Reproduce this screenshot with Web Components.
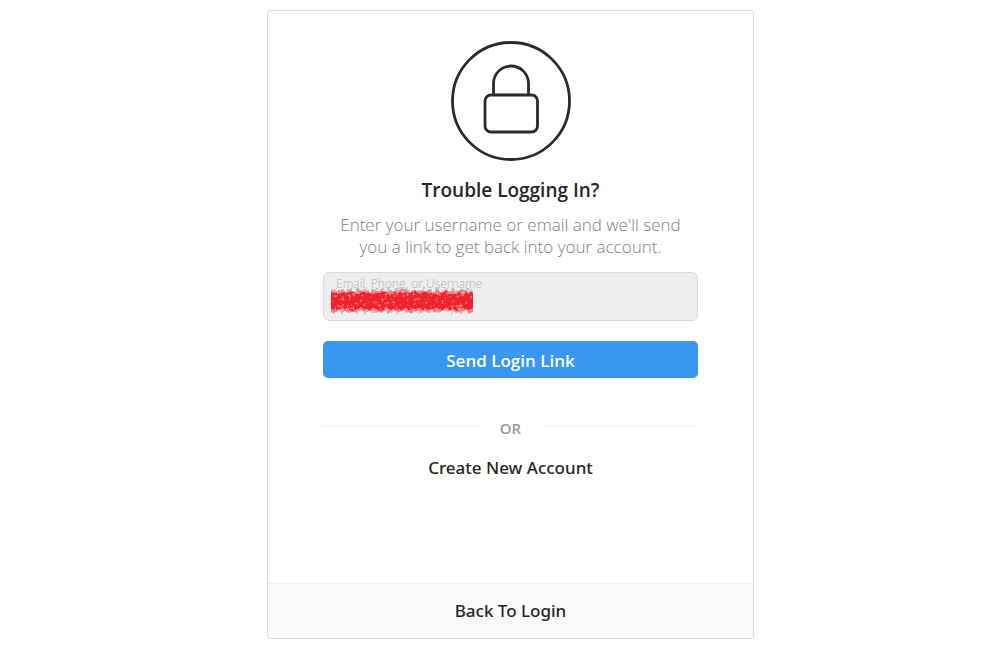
<!DOCTYPE html>
<html lang="en">
<head>
<meta charset="utf-8">
<meta name="viewport" content="width=device-width, initial-scale=1">
<title>Trouble Logging In?</title>
<style>
body { margin: 0; background: #fff; color: #262626; font-family: "Open Sans", "Noto Sans", sans-serif; }
</style>
</head>
<body>
<recovery-page></recovery-page>
<script>
const define = (name, html, setup) => customElements.define(name, class extends HTMLElement {
  constructor() {
    super();
    const t = document.createElement('template');
    t.innerHTML = html;
    this.attachShadow({ mode: 'open' }).append(t.content.cloneNode(true));
  }
  connectedCallback() { if (setup) setup(this, this.shadowRoot); }
});

define('lock-badge', `
<style>:host{display:block;width:120px;height:120px} svg{display:block;width:100%;height:100%}</style>
<svg viewBox="0 0 120 120" fill="none" stroke="#2b2b2b" stroke-width="2.8" aria-hidden="true">
  <circle cx="60" cy="60" r="58.5"/>
  <path d="M42.5 53V42.5a17.5 17.5 0 0 1 35 0V53"/>
  <rect x="34" y="54" width="52.5" height="37" rx="6"/>
</svg>`);

define('text-field', `
<style>
:host{display:block;position:relative}
.box{display:flex;flex-direction:column;box-sizing:border-box;height:49px;padding:3px 12px;border:1px solid #dbdbdb;border-radius:6px;background:#eee}
label{font-size:12px;line-height:16px;font-weight:300;color:#b4b0b1}
input{width:100%;flex:1;min-height:0;padding:0;border:0;outline:0;background:transparent;color:inherit;font:inherit;font-size:16px}
::slotted(*){position:absolute;left:8px;top:15px}
</style>
<div class="box"><label for="f"></label><input id="f" type="text" autocomplete="username"></div>
<slot></slot>`, (el, root) => { root.querySelector('label').textContent = el.getAttribute('label'); });

define('spray-mark', `
<style>:host{display:block;width:142px;height:28px;pointer-events:none} svg{display:block;width:100%;height:100%}</style>
<svg viewBox="0 0 142 28" aria-hidden="true">
  <defs>
    <filter id="rough" x="0" y="0" width="142" height="28" filterUnits="userSpaceOnUse" color-interpolation-filters="sRGB">
      <feTurbulence type="fractalNoise" baseFrequency="0.22" numOctaves="2" seed="4" result="n"/>
      <feDisplacementMap in="SourceGraphic" in2="n" scale="7" xChannelSelector="R" yChannelSelector="G"/>
    </filter>
    <filter id="specks" x="0" y="0" width="142" height="28" filterUnits="userSpaceOnUse" color-interpolation-filters="sRGB">
      <feTurbulence type="fractalNoise" baseFrequency="0.28" numOctaves="2" seed="9"/>
      <feColorMatrix values="0 0 0 0 .93  0 0 0 0 .5  0 0 0 0 .52  6 0 0 0 -3.5"/>
      <feComposite in2="SourceGraphic" operator="in"/>
    </filter>
  </defs>
  <g filter="url(#rough)">
    <path d="M0 3H142M0 25H142" fill="none" stroke="#c6c2c3" stroke-width="2" stroke-dasharray="5 3"/>
    <path d="M-4 4H148V24H-4Z" fill="#ee8084"/>
    <path d="M-4 6H148V22H-4Z" fill="#ef232b"/>
  </g>
  <rect x="1" y="3" width="141" height="22" filter="url(#specks)"/>
</svg>`);

define('primary-button', `
<style>
:host{display:block}
button{display:block;width:100%;height:37px;padding:1px 0 0;border:0;border-radius:5px;background:#3897f0;color:#fff;font:inherit;font-size:17px;font-weight:600;cursor:pointer}
</style><button type="submit"><slot></slot></button>`);

define('or-divider', `
<style>
:host{display:grid;grid-template-columns:1fr auto 1fr;column-gap:22px;font-size:15px;line-height:20px;font-weight:600;color:#999}
i{height:8px;border-bottom:1px solid #efefef}
</style><i></i><slot></slot><i></i>`);

define('plain-link', `
<style>
:host{display:block;text-align:center}
a{font-family:"Noto Sans","Open Sans",sans-serif;font-size:17px;line-height:24px;font-weight:500;color:#262626;text-decoration:none}
</style><a href="#"><slot></slot></a>`);

define('recovery-card', `
<style>
:host{display:block;width:100%;max-width:487px;box-sizing:border-box;border:1px solid #dbdbdb;border-radius:3px;background:#fff;overflow:hidden}
main{display:flex;flex-direction:column;padding:30px 55px 103px}
lock-badge{align-self:center}
h1{margin:16px 0 0;font-size:19px;line-height:26px;font-weight:600;text-align:center}
p{margin:11px 0 14px;font-size:17px;line-height:22px;font-weight:300;color:#808080;text-align:center}
primary-button{margin-top:20px}
or-divider{margin-top:40px}
.create{margin-top:18px}
footer{padding:15px;border-top:1px solid #efefef;background:#fafafa}
</style>
<main>
  <lock-badge></lock-badge>
  <h1>Trouble Logging In?</h1>
  <p>Enter your username or email and we'll send<br>you a link to get back into your account.</p>
  <text-field label="Email, Phone, or Username"><spray-mark></spray-mark></text-field>
  <primary-button>Send Login Link</primary-button>
  <or-divider>OR</or-divider>
  <plain-link class="create">Create New Account</plain-link>
</main>
<footer><plain-link>Back To Login</plain-link></footer>`);

define('recovery-page', `
<style>:host{display:flex;justify-content:center;padding:10px 0 14px 21px}</style>
<recovery-card></recovery-card>`);
</script>
</body>
</html>
